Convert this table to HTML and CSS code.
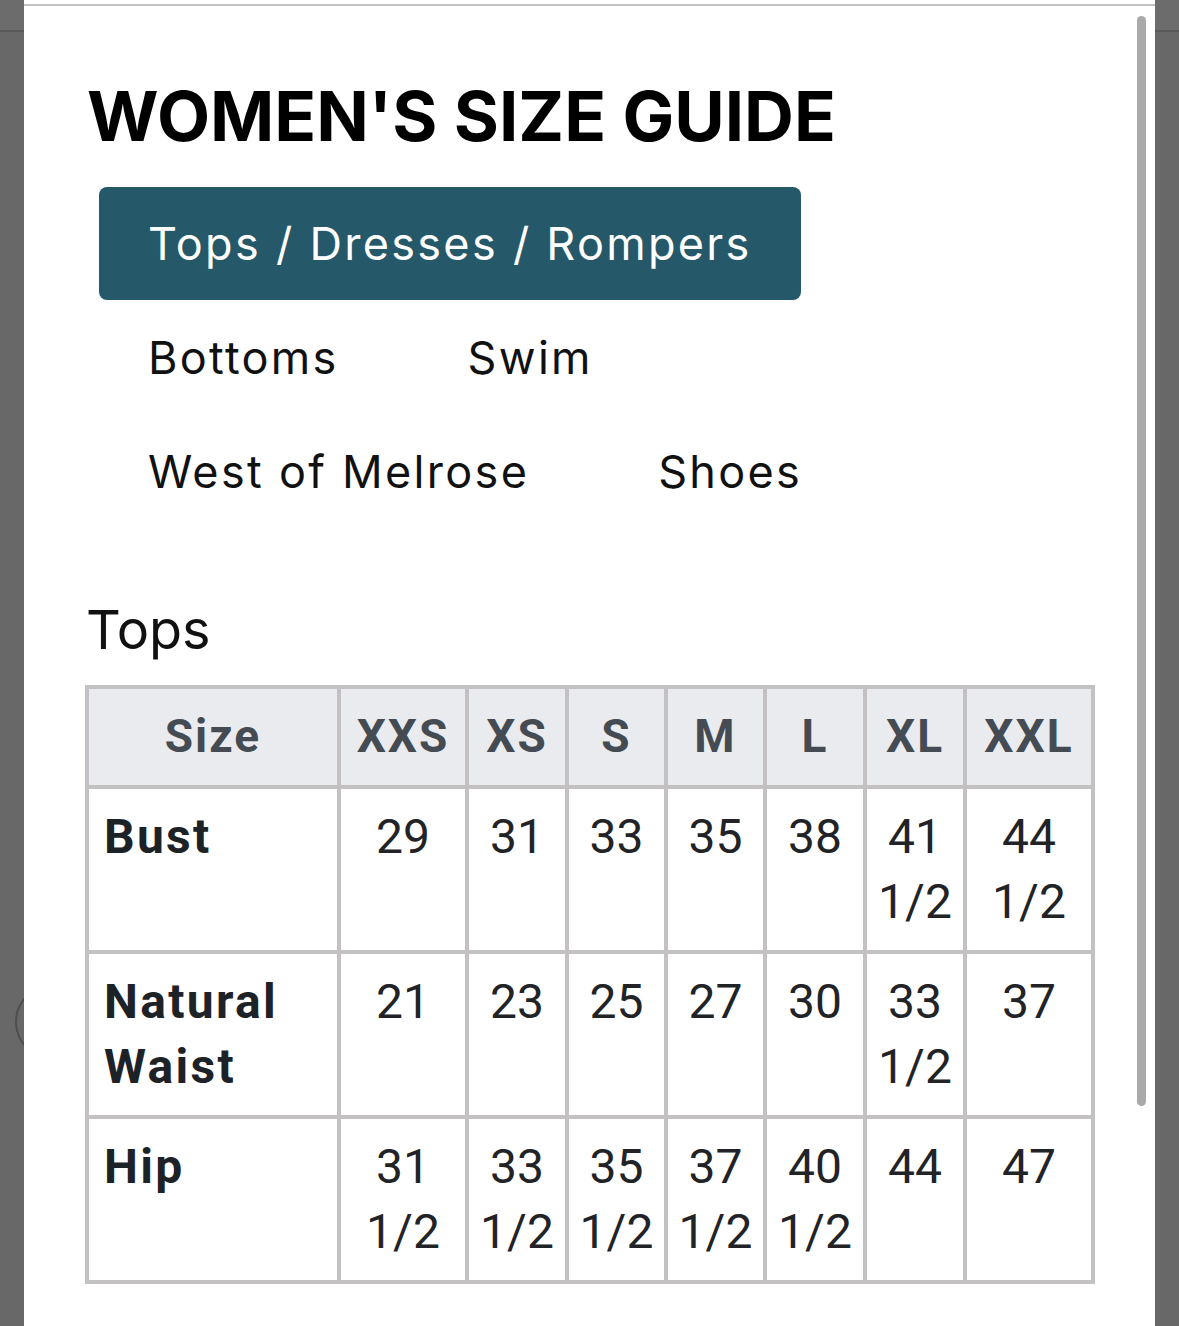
FILE: index.html
```html
<!DOCTYPE html>
<html lang="en">
<head>
<meta charset="utf-8">
<title>Women's Size Guide</title>
<link rel="stylesheet" href="styles.css">
</head>
<body>
<div class="page">
  <div class="page-header"></div>
  <div class="page-circle"></div>
</div>
<div class="modal">
  <div class="modal-inner">
    <div class="scrollbar"></div>
    <h1 class="title">WOMEN'S SIZE GUIDE</h1>
    <div class="tabs">
      <button class="tab tab-active">Tops / Dresses / Rompers</button>
      <button class="tab">Bottoms</button>
      <button class="tab">Swim</button>
      <button class="tab">West of Melrose</button>
      <button class="tab">Shoes</button>
    </div>
    <h2 class="section-title">Tops</h2>
    <table class="size-table">
      <colgroup>
        <col class="c-label">
        <col class="c-xxs">
        <col class="c-xs">
        <col class="c-s">
        <col class="c-m">
        <col class="c-l">
        <col class="c-xl">
        <col class="c-xxl">
      </colgroup>
      <thead>
        <tr>
          <th>Size</th><th>XXS</th><th>XS</th><th>S</th><th>M</th><th>L</th><th>XL</th><th>XXL</th>
        </tr>
      </thead>
      <tbody>
        <tr>
          <td class="label">Bust</td><td>29</td><td>31</td><td>33</td><td>35</td><td>38</td><td>41 1/2</td><td>44 1/2</td>
        </tr>
        <tr>
          <td class="label">Natural Waist</td><td>21</td><td>23</td><td>25</td><td>27</td><td>30</td><td>33 1/2</td><td>37</td>
        </tr>
        <tr>
          <td class="label">Hip</td><td>31 1/2</td><td>33 1/2</td><td>35 1/2</td><td>37 1/2</td><td>40 1/2</td><td>44</td><td>47</td>
        </tr>
      </tbody>
    </table>
  </div>
</div>
</body>
</html>
```
FILE: styles.css
```css
html, body {
  margin: 0;
  padding: 0;
}
body {
  background: #686868;
  width: 1179px;
  height: 1326px;
  overflow: hidden;
  position: relative;
  font-family: "Inter", "Roboto", sans-serif;
}
.page-header {
  height: 30px;
  background: #6c6c6c;
  border-bottom: 2px solid #595959;
}
.page-circle {
  position: absolute;
  left: 15px;
  top: 985px;
  width: 74px;
  height: 74px;
  border: 2px solid #4e4e4e;
  border-radius: 50%;
  box-sizing: border-box;
}
.modal {
  position: absolute;
  left: 24px;
  top: 0;
  width: 1131px;
  height: 1326px;
  background: #ffffff;
  padding-top: 4px;
  box-sizing: border-box;
}
.modal-inner {
  position: relative;
  border-top: 2px solid #c2c2c2;
  height: 100%;
  padding: 0 62px 0 63px;
  box-sizing: border-box;
}
.scrollbar {
  position: absolute;
  left: 1113px;
  top: 10px;
  width: 9px;
  height: 1090px;
  border-radius: 5px;
  background: #a9a9a9;
}
.title {
  margin: 0;
  padding-top: 67px;
  font-family: "Inter", sans-serif;
  font-weight: 700;
  font-size: 69px;
  line-height: 86px;
  letter-spacing: 0;
  color: #000;
}
.tabs {
  display: flex;
  flex-wrap: wrap;
  column-gap: 31px;
  row-gap: 1px;
  margin: 28px 0 0 12px;
  width: 1000px;
}
.tab {
  flex: 0 0 auto;
  white-space: nowrap;
  height: 113px;
  padding: 0 49px;
  border: none;
  border-radius: 8px;
  background: transparent;
  font-family: "Inter", sans-serif;
  font-weight: 400;
  font-size: 45px;
  letter-spacing: 2.3px;
  color: #111;
  cursor: pointer;
}
.tab-active {
  background: #255868;
  color: #ffffff;
}
.section-title {
  margin: 70px 0 0 -1px;
  font-family: "Inter", sans-serif;
  font-weight: 400;
  font-size: 54px;
  line-height: 64px;
  color: #111;
}
.size-table {
  margin: 23px 0 0 -2px;
  border-collapse: collapse;
  table-layout: fixed;
  width: 1010px;
  border: 4px solid #c4c1c2;
  font-family: "Roboto", sans-serif;
  font-size: 48px;
  line-height: 65px;
  color: #222326;
}
.c-label { width: 252px; }
.c-xxs { width: 128px; }
.c-xs { width: 100px; }
.c-s { width: 99px; }
.c-m { width: 99px; }
.c-l { width: 100px; }
.c-xl { width: 100px; }
.c-xxl { width: 128px; }
.size-table th,
.size-table td {
  border: 4px solid #c4c1c2;
  padding: 15px 8px 16px;
  text-align: center;
  vertical-align: top;
}
.size-table th {
  background: #e9ebee;
  color: #454b53;
  font-weight: 700;
  font-size: 46px;
  letter-spacing: 2px;
}
.size-table td.label {
  text-align: left;
  font-weight: 700;
  color: #1d2227;
  letter-spacing: 2.3px;
  padding-left: 15px;
}
```
